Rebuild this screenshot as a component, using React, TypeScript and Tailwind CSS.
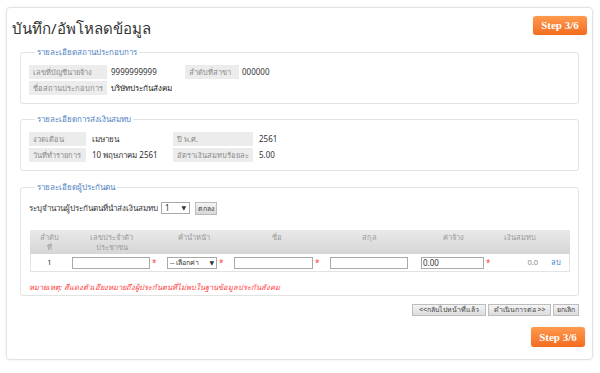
import React from "react";

const font = { fontFamily: "Tahoma, 'Noto Sans', 'DejaVu Sans', sans-serif" };

function Legend({ children }: { children: React.ReactNode }) {
  return (
    <legend className="ml-[6px] px-[2px] text-[8px] leading-[10px] text-[#4f7fc0] whitespace-nowrap">{children}</legend>
  );
}

function Label({ children, w }: { children: React.ReactNode; w: string }) {
  return (
    <div className={`${w} h-[14px] bg-[#ececec] text-[#8a8a8a] text-[7.5px] leading-[14px] px-[4px] whitespace-nowrap overflow-hidden`}>{children}</div>
  );
}

function Step({ h }: { h: string }) {
  return (
    <div
      className={`w-[54px] ${h} rounded-[3px] bg-gradient-to-b from-[#ff9a4d] to-[#f26b1d] text-white font-bold text-[11px] text-center flex items-center justify-center shadow-[0_0_1px_rgba(0,0,0,0.3)]`}
      style={{ fontFamily: "'Liberation Serif', serif" }}
    >
      Step 3/6
    </div>
  );
}

function Btn({ children, w }: { children: React.ReactNode; w: string }) {
  return (
    <div className={`${w} h-[12px] border border-[#bdbdbd] bg-gradient-to-b from-[#f4f4f4] to-[#dcdcdc] text-[7px] leading-[10px] text-[#444] text-center whitespace-nowrap overflow-hidden`}>
      {children}
    </div>
  );
}

const Star = () => <span className="text-[#ff3b3b] text-[8px] leading-[12px] w-[4px] ml-[2px]">*</span>;

export default function App() {
  return (
    <div className="w-[600px] h-[373px] bg-white pt-[7px] pl-[6px]" style={font}>
      <div className="w-[587px] h-[353px] border border-[#e3e3e3] rounded-[4px] shadow-[0_0_3px_rgba(0,0,0,0.08)] flex flex-col">
        <div className="flex justify-between items-start pt-[8px] pl-[5px] pr-[5px]">
          <div className="text-[15px] leading-[20px] text-[#333] mt-[2px]">บันทึก/อัพโหลดข้อมูล</div>
          <Step h="h-[19px]" />
        </div>

        <div className="px-[13px] flex flex-col">
          {/* Fieldset 1 */}
          <fieldset className="mt-[9px] h-[57px] border border-[#e3e3e3] rounded-[3px] px-[8px] pt-[8px]">
            <Legend>รายละเอียดสถานประกอบการ</Legend>
            <div className="flex flex-col gap-[2px]">
              <div className="flex items-center text-[8px] leading-[14px] whitespace-nowrap">
                <Label w="w-[78px]">เลขที่บัญชีนายจ้าง</Label>
                <div className="w-[78px] pl-[4px] text-[#333]">9999999999</div>
                <Label w="w-[54px]">ลำดับที่สาขา</Label>
                <div className="pl-[3px] text-[#333]">000000</div>
              </div>
              <div className="flex items-center text-[8px] leading-[14px] whitespace-nowrap">
                <Label w="w-[78px]">ชื่อสถานประกอบการ</Label>
                <div className="pl-[4px] text-[#222]">บริษัทประกันสังคม</div>
              </div>
            </div>
          </fieldset>

          {/* Fieldset 2 */}
          <fieldset className="mt-[10px] h-[57px] border border-[#e3e3e3] rounded-[3px] px-[8px] pt-[8px]">
            <Legend>รายละเอียดการส่งเงินสมทบ</Legend>
            <div className="flex flex-col gap-[2px]">
              <div className="flex items-center text-[8px] leading-[14px] whitespace-nowrap">
                <Label w="w-[57px]">งวดเดือน</Label>
                <div className="w-[87px] pl-[6px] text-[#333]">เมษายน</div>
                <Label w="w-[80px]">ปี พ.ศ.</Label>
                <div className="pl-[6px] text-[#333]">2561</div>
              </div>
              <div className="flex items-center text-[8px] leading-[14px] whitespace-nowrap">
                <Label w="w-[57px]">วันที่ทำรายการ</Label>
                <div className="w-[87px] pl-[6px] text-[#333]">10 พฤษภาคม 2561</div>
                <Label w="w-[80px]">อัตราเงินสมทบร้อยละ</Label>
                <div className="pl-[6px] text-[#333]">5.00</div>
              </div>
            </div>
          </fieldset>

          {/* Fieldset 3 */}
          <fieldset className="mt-[11px] h-[114px] border border-[#e3e3e3] rounded-[3px] px-[8px] pt-[9px]">
            <Legend>รายละเอียดผู้ประกันตน</Legend>
            <div className="flex items-center text-[8px] text-[#333] h-[14px] whitespace-nowrap">
              <span>ระบุจำนวนผู้ประกันตนที่นำส่งเงินสมทบ</span>
              <div className="ml-[3px] w-[29px] h-[12px] border border-[#aaa] bg-white flex items-center justify-between px-[3px] text-[8px]">
                <span>1</span>
                <span className="text-[6px]">▼</span>
              </div>
              <div className="ml-[5px] w-[22px] h-[13px] border border-[#bbb] bg-gradient-to-b from-[#f4f4f4] to-[#d9d9d9] text-[7px] leading-[11px] text-center text-[#444]">ตกลง</div>
            </div>

            <div className="mt-[15px] ml-[1px] w-[540px] text-[7.5px]">
              <div className="h-[24px] bg-gradient-to-b from-[#e9e9e9] to-[#d6d6d6] flex text-[#9a9a9a] leading-[10px] whitespace-nowrap">
                <div className="w-[38px] text-center pt-[2px]">ลำดับ<br />ที่</div>
                <div className="w-[87px] text-center pt-[2px]">เลขประจำตัว<br />ประชาชน</div>
                <div className="w-[78px] text-center pt-[2px]">คำนำหน้า</div>
                <div className="w-[88px] text-center pt-[2px]">ชื่อ</div>
                <div className="w-[96px] text-center pt-[2px]">สกุล</div>
                <div className="w-[72px] text-center pt-[2px]">ค่าจ้าง</div>
                <div className="w-[62px] text-center pt-[2px]">เงินสมทบ</div>
                <div className="flex-1"></div>
              </div>
              <div className="h-[18px] border border-t-0 border-[#e3e3e3] flex items-center text-[#333] whitespace-nowrap">
                <div className="w-[37px] text-center">1</div>
                <div className="w-[4px]" />
                <div className="w-[78px] h-[12px] border border-[#a9a9a9] bg-white" />
                <Star />
                <div className="w-[11px]" />
                <div className="w-[50px] h-[12px] border border-[#a9a9a9] bg-white flex items-center justify-between px-[2px] text-[7px] leading-[10px]">
                  <span>-- เลือกค่า</span>
                  <span className="text-[6px]">▼</span>
                </div>
                <Star />
                <div className="w-[11px]" />
                <div className="w-[79px] h-[12px] border border-[#a9a9a9] bg-white" />
                <Star />
                <div className="w-[11px]" />
                <div className="w-[78px] h-[12px] border border-[#a9a9a9] bg-white" />
                <div className="w-[13px]" />
                <div className="w-[63px] h-[12px] border border-[#a9a9a9] bg-white text-[8px] leading-[10px] pl-[1px]">0.00</div>
                <Star />
                <div className="w-[48px] text-right text-[#888]">0.0</div>
                <div className="ml-[13px] text-[#3a7dc9]">ลบ</div>
              </div>
            </div>

            <div className="mt-[10px] text-[7.5px] italic text-[#ff3b3b] whitespace-nowrap">
              หมายเหตุ: สีแดงตัวเอียงหมายถึงผู้ประกันตนที่ไม่พบในฐานข้อมูลประกันสังคม
            </div>
          </fieldset>

          <div className="mt-[8px] flex justify-end gap-[2px]">
            <Btn w="w-[74px]">&lt;&lt;กลับไปหน้าที่แล้ว</Btn>
            <Btn w="w-[63px]">ดำเนินการต่อ &gt;&gt;</Btn>
            <Btn w="w-[26px]">ยกเลิก</Btn>
          </div>
        </div>

        <div className="mt-[11px] flex justify-end pr-[7px]">
          <Step h="h-[20px]" />
        </div>
      </div>
    </div>
  );
}
